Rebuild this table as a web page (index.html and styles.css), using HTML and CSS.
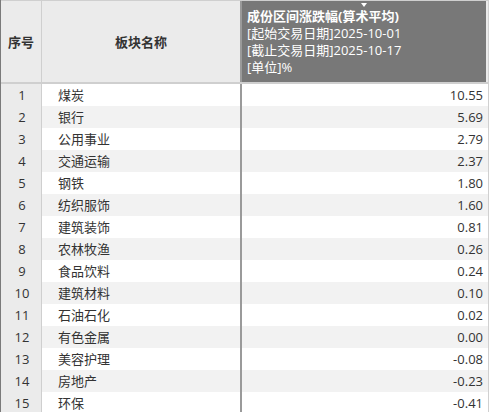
FILE: index.html
```html
<!DOCTYPE html>
<html>
<head>
<meta charset="utf-8">
<link rel="stylesheet" href="styles.css">
</head>
<body>
<div class="table">
  <div class="head">
    <div class="h h-seq">序号</div>
    <div class="h h-name">板块名称</div>
    <div class="h h-val">
      <span class="sort"></span>
      <div class="hl b">成份区间涨跌幅(算术平均)</div>
      <div class="hl">[起始交易日期]2025-10-01</div>
      <div class="hl">[截止交易日期]2025-10-17</div>
      <div class="hl">[单位]%</div>
    </div>
  </div>
  <div class="row"><div class="c seq">1</div><div class="c name">煤炭</div><div class="c val">10.55</div></div>
  <div class="row alt"><div class="c seq">2</div><div class="c name">银行</div><div class="c val">5.69</div></div>
  <div class="row"><div class="c seq">3</div><div class="c name">公用事业</div><div class="c val">2.79</div></div>
  <div class="row alt"><div class="c seq">4</div><div class="c name">交通运输</div><div class="c val">2.37</div></div>
  <div class="row"><div class="c seq">5</div><div class="c name">钢铁</div><div class="c val">1.80</div></div>
  <div class="row alt"><div class="c seq">6</div><div class="c name">纺织服饰</div><div class="c val">1.60</div></div>
  <div class="row"><div class="c seq">7</div><div class="c name">建筑装饰</div><div class="c val">0.81</div></div>
  <div class="row alt"><div class="c seq">8</div><div class="c name">农林牧渔</div><div class="c val">0.26</div></div>
  <div class="row"><div class="c seq">9</div><div class="c name">食品饮料</div><div class="c val">0.24</div></div>
  <div class="row alt"><div class="c seq">10</div><div class="c name">建筑材料</div><div class="c val">0.10</div></div>
  <div class="row"><div class="c seq">11</div><div class="c name">石油石化</div><div class="c val">0.02</div></div>
  <div class="row alt"><div class="c seq">12</div><div class="c name">有色金属</div><div class="c val">0.00</div></div>
  <div class="row"><div class="c seq">13</div><div class="c name">美容护理</div><div class="c val">-0.08</div></div>
  <div class="row alt"><div class="c seq">14</div><div class="c name">房地产</div><div class="c val">-0.23</div></div>
  <div class="row"><div class="c seq">15</div><div class="c name">环保</div><div class="c val">-0.41</div></div>
</div>
</body>
</html>
```
FILE: styles.css
```css
html, body {
  margin: 0;
  padding: 0;
  background: #ffffff;
}
body {
  width: 489px;
  height: 412px;
  overflow: hidden;
  font-family: "Open Sans", "Noto Sans CJK SC", sans-serif;
  font-size: 13px;
  color: #333333;
}
.table {
  width: 487px;
  border-left: 1px solid #7a7a7a;
  border-right: 1px solid #d0d0d0;
}
.head, .row {
  display: grid;
  grid-template-columns: 40px 1px 198px 2px 244px;
}
.head {
  height: 81px;
  border-top: 1px solid #cfcfcf;
  border-bottom: 2px solid #cfcfcf;
  background: #ebebeb;
}
.h {
  display: flex;
  align-items: center;
  justify-content: center;
  font-weight: bold;
  color: #333333;
  font-family: "Noto Sans CJK SC", sans-serif;
}
.h-seq, .seq {
  grid-column: 1 / span 2;
  border-right: 1px solid #cfcfcf;
}
.h-name, .name {
  grid-column: 3 / span 2;
  border-right: 2px solid #9a9a9a;
}
.h-val, .val { grid-column: 5; }
.h-val {
  position: relative;
  background: #787878;
  color: #ffffff;
  flex-direction: column;
  align-items: flex-start;
  justify-content: center;
  padding-left: 5px;
  font-weight: normal;
}
.hl {
  line-height: 17px;
  white-space: nowrap;
  font-family: "Open Sans", "Noto Sans CJK SC", sans-serif;
}
.hl.b { font-weight: bold; }
.sort {
  position: absolute;
  top: 2px;
  left: 119px;
  width: 0;
  height: 0;
  border-left: 3px solid transparent;
  border-right: 3px solid transparent;
  border-top: 4px solid #ffffff;
}
.row {
  height: 22px;
  line-height: 22px;
  background: #ffffff;
}
.row.alt { background: #f2f2f2; }
.c { white-space: nowrap; }
.seq {
  background: #ebebeb;
  text-align: center;
  padding-left: 2px;
}
.name {
  padding-left: 16px;
  font-family: "Noto Sans CJK SC", sans-serif;
}
.val {
  text-align: right;
  padding-right: 3px;
}
```
